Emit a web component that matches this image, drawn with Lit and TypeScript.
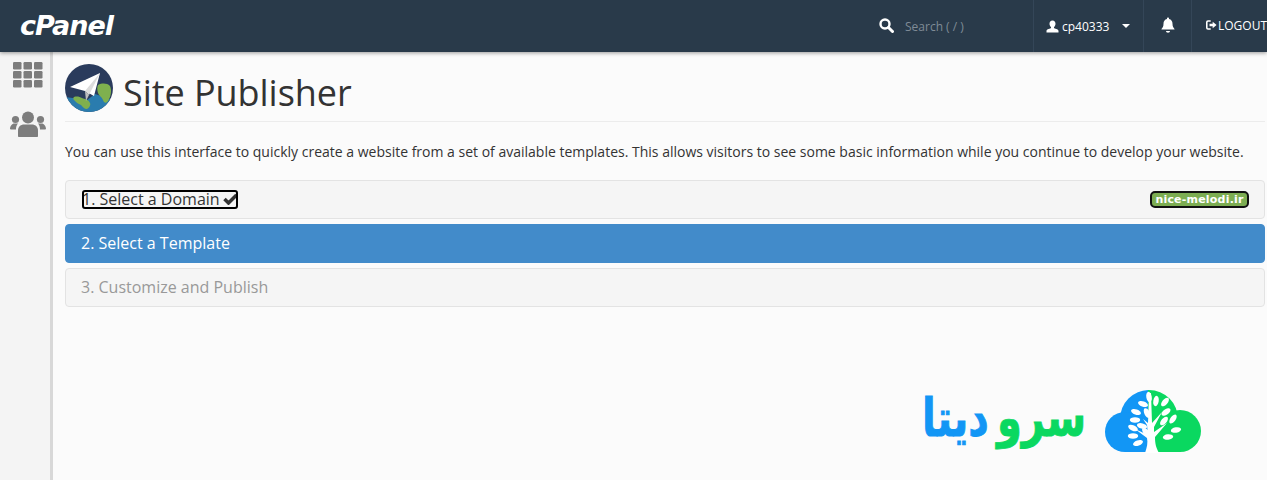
import { LitElement, html, css, svg } from "lit";
import { customElement } from "lit/decorators.js";

const userIcon = svg`<svg width="13" height="13" viewBox="0 0 12 13"><path fill="#fff" d="M6 0.500c1.900 0 3 1.400 3 3.200 0 1.300-.6 2.600-1.500 3.200v1c.4.600 4.500 1 4.500 3v1.600H0v-1.600c0-2 4.100-2.400 4.500-3v-1C3.600 6.300 3 5 3 3.700 3 1.900 4.100.5 6 .5z"/></svg>`;
const searchIcon = svg`<svg width="15" height="15" viewBox="0 0 15 15"><circle cx="6" cy="6" r="4.500" fill="none" stroke="#fff" stroke-width="2.400"/><path d="M9.500 9.500L13.500 13.500" stroke="#fff" stroke-width="3" stroke-linecap="round"/></svg>`;
const bellIcon = svg`<svg width="16" height="16" viewBox="0 0 16 16"><path fill="#fff" d="M8 0.500c.6 0 1 .4 1 1v.6c2.300.5 3.500 2.400 3.500 4.700 0 3 1 4 2 5.200v.6H1.500v-.6c1-1.200 2-2.200 2-5.200C3.500 4.500 4.700 2.600 7 2.100v-.6c0-.6.400-1 1-1z"/><path fill="#fff" d="M6 14h4c0 1-.9 1.700-2 1.700S6 15 6 14z"/></svg>`;
const logoutIcon = svg`<svg width="14" height="12" viewBox="0 0 14 12"><path fill="none" stroke="#fff" stroke-width="2" d="M6 1H2.500C1.700 1 1 1.700 1 2.500v7C1 10.300 1.700 11 2.500 11H6"/><path fill="#fff" d="M4.500 4.500H8.500V1.800L13.500 6 8.500 10.200V7.500H4.500z"/></svg>`;
const gridIcon = svg`<svg width="30" height="26" viewBox="0 0 30 26"><g fill="#7d7d7d">
${[0, 10.5, 21].flatMap((x) => [0, 9, 18].map((y) => svg`<rect x=${x} y=${y} width="8.500" height="7.500" rx="1.200"/>`))}
</g></svg>`;
const usersIcon = svg`<svg width="36" height="26" viewBox="0 0 36 26"><g fill="#7d7d7d">
<circle cx="18" cy="6.500" r="6"/><circle cx="5.500" cy="8.500" r="3.600"/><circle cx="30.500" cy="8.500" r="3.600"/>
<path d="M8 25v-5.500C8 15.500 11 13.500 14 13.500h8c3 0 6 2 6 6V25c0 .6-.5 1-1 1H9c-.5 0-1-.4-1-1z"/>
<path d="M0 18c0-3 2-5.500 4.500-5.500h3.500C6.500 14 6 16 6 18.500H1c-.6 0-1-.4-1-.5z"/>
<path d="M36 18c0-3-2-5.500-4.500-5.500H28c1.500 1.500 2 3.500 2 6h5c.6 0 1-.4 1-.5z"/></g></svg>`;
const pubIcon = svg`<svg width="48" height="48" viewBox="0 0 48 48">
<defs><clipPath id="gl"><circle cx="24" cy="24" r="24"/></clipPath></defs>
<g clip-path="url(#gl)">
<rect width="48" height="48" fill="#2a3b5c"/>
<path d="M0 33L22 36 30 30 48 36V48H0z" fill="#2a7cae"/>
<path d="M33 21c4-2 9-2 12 1 2 4 1 11-2 15-2 3-4 2-5-1-1-3-4-4-5-7-1-3-1-6 0-8z" fill="#7fb04e"/>
<path d="M9 33c3-1 6 0 8 1 3 1 7 2 8 5 1 2-1 5-3 6-3 0-4-2-6-4-3-1-5-3-7-5-1-1-1-2 0-3z" fill="#7fb04e"/>
<path d="M5 23L35 9 29 32 20 27z" fill="#fff"/>
<path d="M20 27L35 9 24 31z" fill="#dcdcdc"/>
<path d="M20 27L21 37 24 31z" fill="#bdbdbd"/>
</g></svg>`;
const leaves = [[38,14,20],[31,22,20],[30,30,0],[37,36,15],[28,38,25],[28,46,0],[33,53,-20],[44,7,80],[42,23,65],[41,42,50],[51,11,-80],[60,12,-50],[61,22,-35],[68,29,-55],[59,31,-50],[71,40,-10],[63,47,-5]];
const treeLogo = svg`<svg width="98" height="65" viewBox="0 0 98 65">
<defs><clipPath id="lh"><rect x="0" y="0" width="43" height="65"/></clipPath><clipPath id="rh"><rect x="43" y="0" width="55" height="65"/></clipPath></defs>
<g clip-path="url(#lh)" fill="#1296f5"><circle cx="44" cy="29" r="29"/><circle cx="20" cy="42" r="20"/><rect x="20" y="30" width="30" height="32"/></g>
<g clip-path="url(#rh)" fill="#0ad860"><circle cx="44" cy="29" r="29"/><circle cx="75" cy="41" r="21"/><rect x="40" y="30" width="35" height="32"/></g>
<path d="M40 63c2-6 3-10 2-15L30 39l13 6-1-10-4-6 5 4 1-30 2 0 1 30 10-11-8 15 0 5 13-9-12 14c0 7 1 10 4 16z" fill="#fff"/>
<g fill="#fff">${leaves.map(([x,y,r]) => svg`<ellipse cx=${x} cy=${y} rx="5.200" ry="2.700" transform="rotate(${r} ${x} ${y})"/>`)}</g></svg>`;

@customElement("app-root")
export class AppRoot extends LitElement {
  static styles = css`
    :host { display: block; height: 480px; overflow: hidden; background: #fbfbfb; font-family: "Open Sans", sans-serif; color: #333; position: relative; }
    .top { height: 52px; background: #293a4a; box-shadow: 0 1px 4px rgba(0,0,0,.4); display: flex; align-items: stretch; position: relative; color: #fff; }
    .brand { font: italic 700 27px/1 "DejaVu Sans", sans-serif; letter-spacing: -1px; margin: 12px 0 0 20px; height: 27px; }
    .spacer { flex: 1; }
    .search { width: 154px; display: flex; align-items: center; gap: 11px; color: #7f8b96; font-size: 12px; box-sizing: border-box; }
    .search svg { flex: none; margin-bottom: 2px; }
    .cell { border-left: 1px solid #344658; display: flex; align-items: center; font-size: 12px; box-sizing: border-box; }
    .user { width: 110px; padding-left: 12px; gap: 3px; }
    .caret { width: 0; height: 0; border: 4px solid transparent; border-top-color: #fff; border-bottom: 0; margin-left: 10px; }
    .bell { width: 48px; justify-content: center; padding-bottom: 3px; padding-left: 1px; }
    .logout { width: 76px; padding-left: 14px; gap: 1px; white-space: nowrap; overflow: hidden; padding-bottom: 2px; }
    .body { display: flex; height: 428px; }
    .side { flex: none; background: #f4f4f4; border-right: 3px solid #d8d8d8; display: flex; flex-direction: column; align-items: center; gap: 23px; padding: 10px 0 0 5px; box-sizing: border-box; width: 53px; }
    .side svg { flex: none; }
    .main { flex: 1; padding: 12px 2px 0 12px; min-width: 0; }
    .title { display: flex; align-items: flex-start; gap: 10px; height: 57px; border-bottom: 1px solid #ececec; }
    h1 { font-size: 36px; font-weight: 400; margin: 11px 0 0; line-height: 1; color: #333; letter-spacing: -.05px; }
    p { font-size: 14px; margin: 20px 0 0; line-height: 19px; color: #333; white-space: nowrap; }
    .steps { margin-top: 19px; display: flex; flex-direction: column; gap: 5px; }
    .step { height: 39px; box-sizing: border-box; border: 1px solid #e3e3e3; border-radius: 4px; background: #f5f5f5; font-size: 16px; display: flex; align-items: center; justify-content: space-between; padding: 0 15px; }
    .first { padding: 0 16px 1px 16px; }
    .active { background: #428bca; border-color: #428bca; color: #fff; padding-bottom: 1px; }
    .off { color: #999; padding-bottom: 1px; }
    .focus { outline: 2px solid #000; outline-offset: -2px; border-radius: 3px; display: flex; align-items: center; gap: 3px; height: 19px; width: 156px; color: #333; white-space: nowrap; }
    .check { flex: none; }
    .domain { background: #7cad52; color: #fff; font: 700 11px/1 "DejaVu Sans", sans-serif; letter-spacing: .2px; padding: 2px 2px; height: 15px; box-sizing: border-box; width: 97px; text-align: center; border-radius: 4px; outline: 2px solid #111; outline-offset: -1px; white-space: nowrap; overflow: hidden; }
    .mark { position: absolute; left: 921px; top: 390px; display: flex; align-items: center; gap: 19px; }
    .mark svg { flex: none; }
    .fa { font: 700 40px/65px "DejaVu Sans", sans-serif; -webkit-text-stroke: .7px; display: flex; gap: 8px; width: 165px; justify-content: flex-start; white-space: nowrap; direction: rtl; transform: translateY(-4px) scaleY(1.3); }
    .g { color: #0ad860; }
    .b { color: #1296f5; }
  `;
  render() {
    return html`
      <div class="top">
        <div class="brand">cPanel</div>
        <div class="spacer"></div>
        <div class="search">${searchIcon}<span>Search ( / )</span></div>
        <div class="cell user">${userIcon}<span>cp40333</span><i class="caret"></i></div>
        <div class="cell bell">${bellIcon}</div>
        <div class="cell logout">${logoutIcon}<span>LOGOUT</span></div>
      </div>
      <div class="body">
        <div class="side">${gridIcon}${usersIcon}</div>
        <div class="main">
          <div class="title">${pubIcon}<h1>Site Publisher</h1></div>
          <p>You can use this interface to quickly create a website from a set of available templates. This allows visitors to see some basic information while you continue to develop your website.</p>
          <div class="steps">
            <div class="step first">
              <div class="focus"><span>1. Select a Domain</span><svg class="check" width="15" height="12" viewBox="0 0 15 12"><path d="M1.500 6L5.500 10 13.500 2" fill="none" stroke="#333" stroke-width="3.500"/></svg></div>
              <div class="domain">nice-melodi.ir</div>
            </div>
            <div class="step active">2. Select a Template</div>
            <div class="step off">3. Customize and Publish</div>
          </div>
        </div>
      </div>
      <div class="mark">
        <div class="fa"><span class="g">سرو</span><span class="b">دیتا</span></div>
        ${treeLogo}
      </div>
    `;
  }
}
